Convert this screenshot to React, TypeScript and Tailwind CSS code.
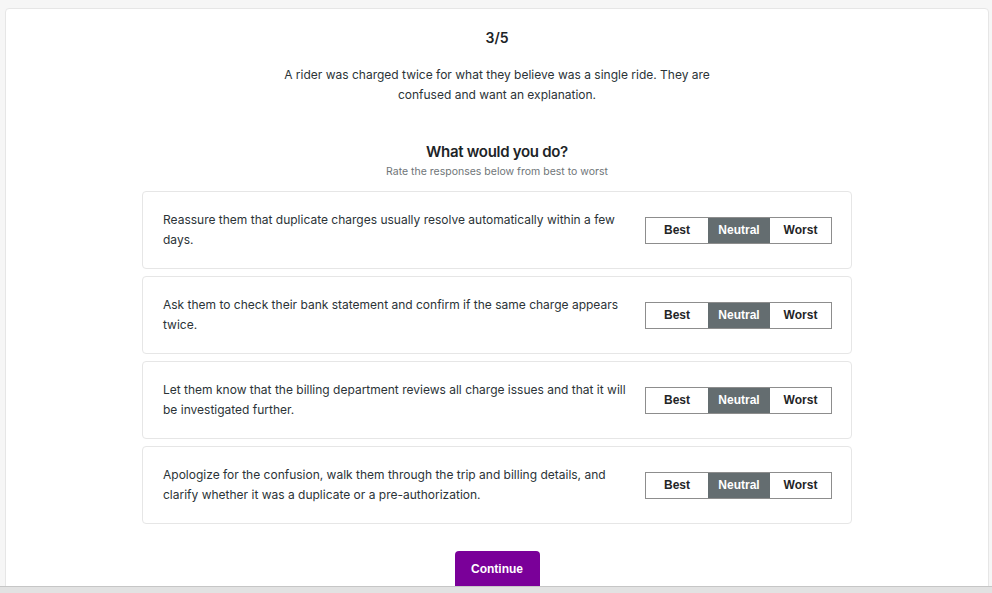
import React from 'react'

const options = [
    'Reassure them that duplicate charges usually resolve automatically within a few days.',
    'Ask them to check their bank statement and confirm if the same charge appears twice.',
    'Let them know that the billing department reviews all charge issues and that it will be investigated further.',
    'Apologize for the confusion, walk them through the trip and billing details, and clarify whether it was a duplicate or a pre-authorization.',
]

function RatingGroup() {
    return (
        <div className="flex shrink-0 border border-[#8d8d8d] text-[12px] font-bold [font-family:'Liberation_Sans',Arial,sans-serif]">
            <button type="button" className="w-[62px] h-[25px] bg-white text-[#1f2527]">Best</button>
            <button type="button" className="w-[62px] h-[25px] bg-[#646d70] text-white">Neutral</button>
            <button type="button" className="w-[61px] h-[25px] bg-white text-[#1f2527]">Worst</button>
        </div>
    )
}

export default function App() {
    return (
        <div className="h-[593px] w-[992px] overflow-hidden bg-[#f6f6f6] flex flex-col [font-family:Inter,'Noto_Sans',sans-serif]">
            <div className="flex-1 overflow-hidden pt-[8px] pl-[5px] pr-[3px]">
                <div className="h-[600px] rounded-[4px] border border-[#e6e6e6] bg-white flex flex-col items-center pt-[19px] text-[#2b3337]">
                    <div className="text-[14px] leading-[20px] font-semibold text-[#1d2427]">3/5</div>
                    <p className="mt-[17px] max-w-[450px] text-center text-[12px] leading-[20px]">
                        A rider was charged twice for what they believe was a single ride. They are confused and want an explanation.
                    </p>
                    <h2 className="mt-[35px] text-[15px] leading-[24px] font-semibold text-[#1d2427] tracking-[-0.3px]">What would you do?</h2>
                    <div className="mt-[1px] text-[10.5px] leading-[14px] text-[#6f7578]">Rate the responses below from best to worst</div>
                    <div className="mt-[12px] w-[710px] flex flex-col gap-[7px]">
                        {options.map((text, i) => (
                            <div key={i} className="h-[78px] rounded-[4px] border border-[#e6e6e6] bg-white flex items-center gap-[14px] pl-[20px] pr-[19px]">
                                <p className="flex-1 text-[12px] leading-[20px]">{text}</p>
                                <RatingGroup />
                            </div>
                        ))}
                    </div>
                    <button type="button" className="mt-[27px] w-[85px] h-[40px] rounded-[4px] bg-[#7a0099] text-white text-[12px] font-bold [font-family:'Liberation_Sans',Arial,sans-serif] pb-[4px]">
                        Continue
                    </button>
                </div>
            </div>
            <div className="h-[7px] border-t border-[#c6c6c6] bg-[#e2e2e2]"></div>
        </div>
    )
}
